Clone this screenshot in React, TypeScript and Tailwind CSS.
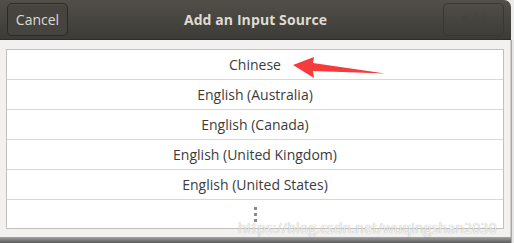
import React from "react";

const rows = [
  "Chinese",
  "English (Australia)",
  "English (Canada)",
  "English (United Kingdom)",
  "English (United States)",
];

export default function App() {
  return (
    <div
      className="relative w-[514px] h-[243px] overflow-hidden bg-[#e9e9e9] flex"
      style={{ fontFamily: '"Open Sans", "Noto Sans", sans-serif' }}
    >
      <div className="w-[511px] flex flex-col">
        {/* header */}
        <div className="h-[40px] rounded-tr-[7px] bg-gradient-to-b from-[#524f49] to-[#3c3b37] flex items-center justify-between px-[7px] border-b border-[#2f2e2b]">
          <button className="h-[33px] w-[61px] rounded-[5px] border border-[#2a2926] bg-[#46443f] text-[#dfdbd2] text-[14px] leading-none shadow-[inset_0_1px_0_rgba(255,255,255,0.06)]">
            Cancel
          </button>
          <div className="text-[14px] font-bold text-[#dfdbd2] tracking-[0.1px]">
            Add an Input Source
          </div>
          <button className="h-[33px] w-[61px] rounded-[5px] border border-[#383733] bg-transparent text-[#46443f] text-[14px] font-bold leading-none">
            Add
          </button>
        </div>
        {/* body */}
        <div className="h-[197px] bg-[#f2f1f0] px-[6px] pt-[9px] pb-[8px] border-r border-[#cfcdc9]">
          <div className="bg-white border border-[#c3c0bb] flex flex-col">
            {rows.map((r) => (
              <div
                key={r}
                className="h-[30px] border-b border-[#d9d7d3] flex items-center justify-center text-[14px] text-[#3c3c3c]"
              >
                {r}
              </div>
            ))}
            <div className="h-[28px] flex items-center justify-center">
              <div className="flex flex-col gap-[3px]">
                <div className="w-[3px] h-[3px] bg-[#8a8a8a]" />
                <div className="w-[3px] h-[3px] bg-[#8a8a8a]" />
                <div className="w-[3px] h-[3px] bg-[#8a8a8a]" />
              </div>
            </div>
          </div>
        </div>
        {/* shadow */}
        <div className="flex-1 bg-gradient-to-b from-[#a3a3a3] to-[#5c5c5c]" />
      </div>
      <div className="flex-1 flex flex-col">
        <div className="h-[40px] bg-[#ececec]" />
        <div className="flex-1 bg-[#e6e6e6] border-l border-[#a9a9a9]" />
      </div>

      {/* red arrow */}
      <svg
        className="absolute left-0 top-0 pointer-events-none"
        width="514"
        height="243"
        viewBox="0 0 514 243"
      >
        <polygon
          points="293,65 314,57 313,63 385,73.5 313,71 314,78"
          fill="#f53b3b"
        />
      </svg>

      {/* watermark */}
      <span className="absolute left-[238px] top-[217px] text-[14px] text-white/85 tracking-[0.2px] [text-shadow:0_0_1px_rgba(0,0,0,0.4)] pointer-events-none">
        https://blog.csdn.net/wuqingshan2030
      </span>
    </div>
  );
}
